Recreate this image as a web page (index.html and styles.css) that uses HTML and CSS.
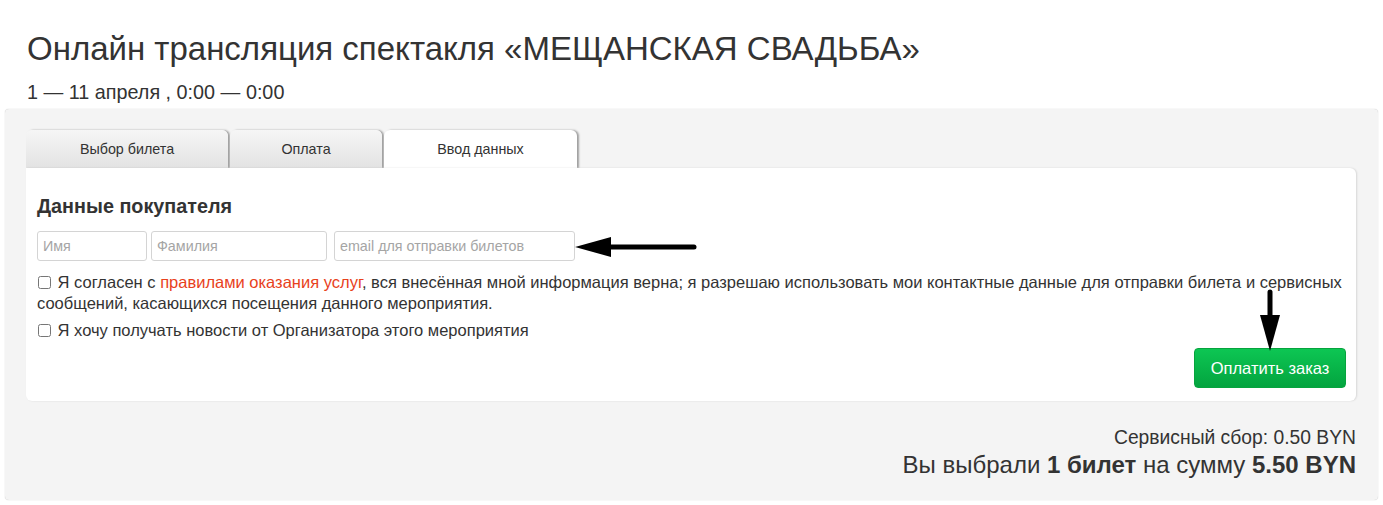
FILE: index.html
```html
<!DOCTYPE html>
<html lang="ru">
<head>
<meta charset="utf-8">
<title>Онлайн трансляция</title>
<link rel="stylesheet" href="styles.css">
</head>
<body>
<div class="page">
  <h1 class="title">Онлайн трансляция спектакля «МЕЩАНСКАЯ СВАДЬБА»</h1>
  <div class="date">1 — 11 апреля , 0:00 — 0:00</div>
  <div class="panel">
    <div class="tabs">
      <div class="tab tab1">Выбор билета</div>
      <div class="tab tab2">Оплата</div>
      <div class="tab tab3 active">Ввод данных</div>
    </div>
    <div class="card">
      <h2 class="card-title">Данные покупателя</h2>
      <div class="inputs">
        <input class="field f-name" type="text" placeholder="Имя">
        <input class="field f-last" type="text" placeholder="Фамилия">
        <input class="field f-email" type="text" placeholder="email для отправки билетов">
      </div>
      <label class="check-row"><input type="checkbox" class="cb"> Я согласен с <a class="link">правилами оказания услуг</a>, вся внесённая мной информация верна; я разрешаю использовать мои контактные данные для отправки билета и сервисных сообщений, касающихся посещения данного мероприятия.</label>
      <label class="check-row second"><input type="checkbox" class="cb"> Я хочу получать новости от Организатора этого мероприятия</label>
      <div class="actions">
        <button class="pay">Оплатить заказ</button>
      </div>
      <svg class="arrow-left" width="124" height="24" viewBox="0 0 124 24"><path d="M119 12 H30" stroke="#000" stroke-width="5" stroke-linecap="round"/><path d="M0 12 L36 2 L36 22 Z" fill="#000"/></svg>
      <svg class="arrow-down" width="24" height="62" viewBox="0 0 24 62"><path d="M12 3 V30" stroke="#000" stroke-width="5" stroke-linecap="round"/><path d="M12 62 L2 26 L22 26 Z" fill="#000"/></svg>
    </div>
    <div class="summary">
      <div class="fee">Сервисный сбор: 0.50 BYN</div>
      <div class="total">Вы выбрали <b>1 билет</b> на сумму <b>5.50 BYN</b></div>
    </div>
  </div>
</div>
</body>
</html>
```
FILE: styles.css
```css
html, body {
  margin: 0;
  padding: 0;
  background: #fff;
}
body {
  font-family: "Liberation Sans", Arial, sans-serif;
  color: #333;
}
.page {
  padding: 0 5px 5px 5px;
}
.title {
  margin: 0;
  padding: 29px 0 0 22px;
  font-size: 33px;
  font-weight: normal;
  line-height: 40px;
  color: #333;
}
.date {
  padding: 11px 0 0 22px;
  font-size: 19.8px;
  line-height: 24px;
  height: 24px;
  color: #333;
}
.panel {
  margin-top: 5px;
  background: #f4f4f4;
  border-radius: 4px;
  box-shadow: 0 0 1px rgba(0,0,0,0.3);
  padding: 21px 22px 0 21px;
  height: 370px;
}
.tabs {
  display: flex;
  gap: 2px;
  height: 38px;
}
.tab {
  box-sizing: border-box;
  height: 38px;
  border-radius: 6px 6px 0 0;
  background: linear-gradient(#f6f6f6, #e3e3e3);
  box-shadow: 2px 0 2px rgba(0,0,0,0.35);
  font-size: 14.3px;
  line-height: 38px;
  text-align: center;
  color: #333;
}
.tab1 { width: 202px; }
.tab2 { width: 152px; }
.tab3 { width: 193px; }
.tab.active {
  background: #fff;
}
.card {
  position: relative;
  background: #fff;
  border-radius: 0 6px 6px 6px;
  box-shadow: 1px 0 2px rgba(0,0,0,0.12);
  height: 233px;
  box-sizing: border-box;
  padding: 26px 11px 0 11px;
}
.card-title {
  margin: 0;
  font-size: 19.8px;
  font-weight: bold;
  line-height: 24px;
  color: #333;
}
.inputs {
  display: flex;
  margin-top: 13px;
  height: 30px;
}
.field {
  box-sizing: border-box;
  height: 30px;
  border: 1px solid #d4d4d4;
  border-radius: 3px;
  padding: 0 5px;
  font-family: "Liberation Sans", Arial, sans-serif;
  font-size: 14.3px;
  color: #333;
  margin: 0;
  outline: none;
}
.field::placeholder { color: #a5a5a5; }
.f-name { width: 110px; }
.f-last { width: 176px; margin-left: 4px; }
.f-email { width: 241px; margin-left: 7px; }
.check-row {
  display: block;
  margin-top: 11px;
  font-size: 16.5px;
  line-height: 21px;
  color: #333;
}
.check-row.second {
  margin-top: 6px;
}
.cb {
  width: 13px;
  height: 13px;
  margin: 0 2px 0 1px;
  vertical-align: -1px;
}
.link {
  color: #e8411c;
}
.actions {
  display: flex;
  justify-content: flex-end;
  margin-top: 7px;
}
.pay {
  width: 152px;
  height: 40px;
  border: 1px solid #06a43e;
  border-radius: 4px;
  background: linear-gradient(#0dc653, #03a43f);
  color: #fff;
  font-family: "Liberation Sans", Arial, sans-serif;
  font-size: 16.5px;
  cursor: pointer;
  margin-right: -1px;
}
.arrow-left {
  position: absolute;
  left: 549px;
  top: 67px;
}
.arrow-down {
  position: absolute;
  left: 1232px;
  top: 121px;
}
.summary {
  text-align: right;
  padding-top: 25px;
}
.fee {
  font-size: 19.3px;
  line-height: 24px;
}
.total {
  font-size: 24px;
  line-height: 30px;
}
```
